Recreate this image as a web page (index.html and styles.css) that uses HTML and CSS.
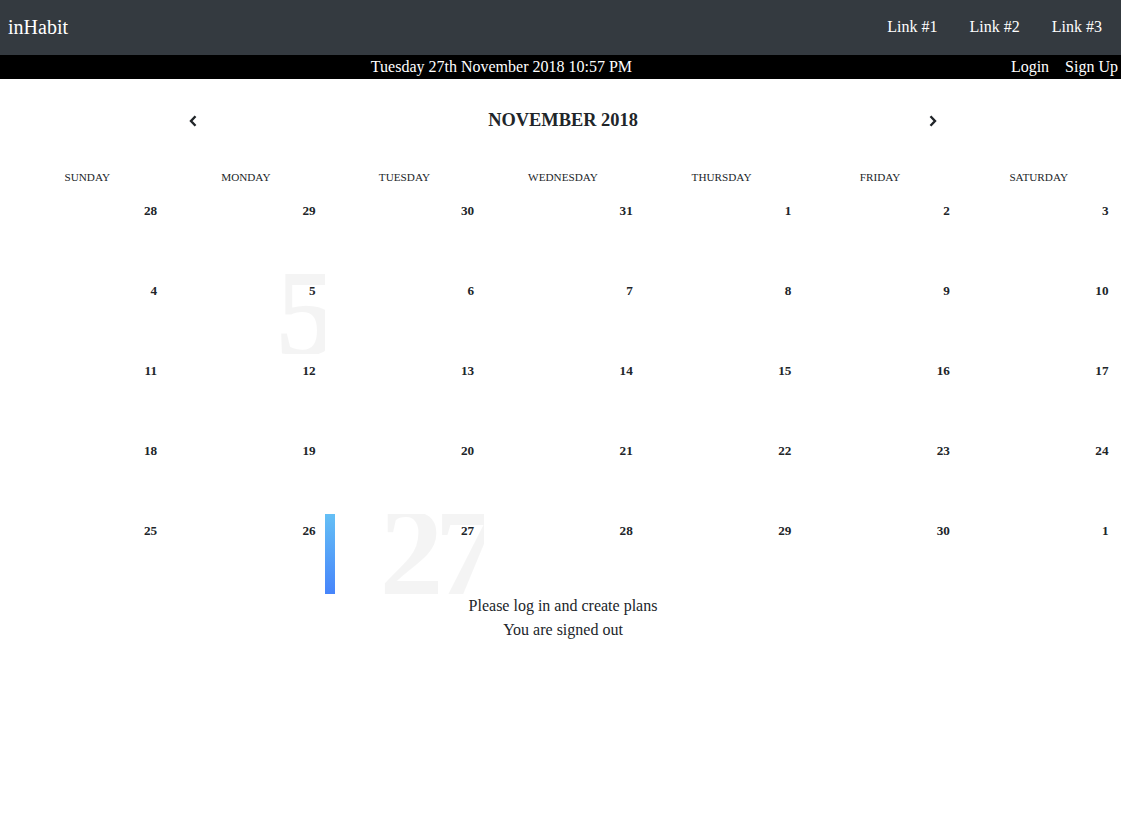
FILE: index.html
```html
<!DOCTYPE html>
<html>
<head>
<meta charset="utf-8">
<link rel="stylesheet" href="styles.css">
</head>
<body>
<nav class="navbar">
  <span class="brand">inHabit</span>
  <div class="nav-links">
    <a class="nav-link">Link #1</a>
    <a class="nav-link">Link #2</a>
    <a class="nav-link">Link #3</a>
  </div>
</nav>
<div class="datebar">
  <div class="date">Tuesday 27th November 2018 10:57 PM</div>
  <div class="auth">
    <a class="auth-link">Login</a>
    <a class="auth-link">Sign Up</a>
  </div>
</div>
<div class="calendar">
  <div class="cal-header">
    <div class="hcol"><svg class="chev" width="8" height="12" viewBox="0 0 8 12"><path d="M6.5 1.2 L2 6 L6.5 10.8" fill="none" stroke="#212529" stroke-width="2.4"/></svg></div>
    <div class="hcol month">November 2018</div>
    <div class="hcol"><svg class="chev" width="8" height="12" viewBox="0 0 8 12"><path d="M1.5 1.2 L6 6 L1.5 10.8" fill="none" stroke="#212529" stroke-width="2.4"/></svg></div>
  </div>
  <div class="days">
    <div class="day">Sunday</div>
    <div class="day">Monday</div>
    <div class="day">Tuesday</div>
    <div class="day">Wednesday</div>
    <div class="day">Thursday</div>
    <div class="day">Friday</div>
    <div class="day">Saturday</div>
  </div>
  <div class="grid">
    <div class="cell"><span class="number">28</span></div>
    <div class="cell"><span class="number">29</span></div>
    <div class="cell"><span class="number">30</span></div>
    <div class="cell"><span class="number">31</span></div>
    <div class="cell"><span class="number">1</span></div>
    <div class="cell"><span class="number">2</span></div>
    <div class="cell"><span class="number">3</span></div>

    <div class="cell"><span class="number">4</span></div>
    <div class="cell hover"><span class="ghost">5</span><span class="number">5</span></div>
    <div class="cell"><span class="number">6</span></div>
    <div class="cell"><span class="number">7</span></div>
    <div class="cell"><span class="number">8</span></div>
    <div class="cell"><span class="number">9</span></div>
    <div class="cell"><span class="number">10</span></div>

    <div class="cell"><span class="number">11</span></div>
    <div class="cell"><span class="number">12</span></div>
    <div class="cell"><span class="number">13</span></div>
    <div class="cell"><span class="number">14</span></div>
    <div class="cell"><span class="number">15</span></div>
    <div class="cell"><span class="number">16</span></div>
    <div class="cell"><span class="number">17</span></div>

    <div class="cell"><span class="number">18</span></div>
    <div class="cell"><span class="number">19</span></div>
    <div class="cell"><span class="number">20</span></div>
    <div class="cell"><span class="number">21</span></div>
    <div class="cell"><span class="number">22</span></div>
    <div class="cell"><span class="number">23</span></div>
    <div class="cell"><span class="number">24</span></div>

    <div class="cell"><span class="number">25</span></div>
    <div class="cell"><span class="number">26</span></div>
    <div class="cell selected"><span class="ghost">27</span><span class="number">27</span></div>
    <div class="cell"><span class="number">28</span></div>
    <div class="cell"><span class="number">29</span></div>
    <div class="cell"><span class="number">30</span></div>
    <div class="cell"><span class="number">1</span></div>
  </div>
  <div class="message">
    <div>Please log in and create plans</div>
    <div>You are signed out</div>
  </div>
</div>
</body>
</html>
```

FILE: styles.css
```css
html, body {
  margin: 0;
  padding: 0;
}
body {
  font-family: "Liberation Serif", "Times New Roman", serif;
  font-size: 16px;
  line-height: 1.5;
  color: #212529;
  background: #fff;
}
.navbar {
  height: 55px;
  background: #343a40;
  display: flex;
  align-items: center;
  justify-content: space-between;
  padding: 0 19px 0 8px;
  box-sizing: border-box;
}
.brand {
  color: #fff;
  font-size: 20px;
  line-height: 1;
  margin-top: -2px;
}
.nav-links {
  display: flex;
  gap: 32px;
}
.nav-link {
  color: #fff;
  font-size: 16px;
  margin-top: -1px;
}
.datebar {
  height: 24px;
  background: #000;
  color: #fff;
  display: flex;
  align-items: center;
  padding-right: 3px;
}
.date {
  flex: 1;
  text-align: center;
  margin-right: 8px;
}
.auth {
  display: flex;
  gap: 16px;
}
.calendar {
  margin: 0 3px 0 8px;
}
.cal-header {
  display: flex;
  align-items: center;
  height: 83px;
  font-weight: 700;
  font-size: 18.4px;
  text-transform: uppercase;
}
.hcol {
  flex: 1;
  text-align: center;
  display: flex;
  justify-content: center;
  align-items: center;
}
.month {
  padding-top: 1px;
}
.chev {
  display: block;
}
.days {
  display: grid;
  grid-template-columns: repeat(7, 1fr);
  height: 32px;
  align-items: center;
  font-size: 11.2px;
  text-transform: uppercase;
  text-align: center;
  padding-bottom: 2px;
  box-sizing: border-box;
}
.grid {
  display: grid;
  grid-template-columns: repeat(7, 1fr);
  grid-auto-rows: 80px;
}
.cell {
  position: relative;
  overflow: hidden;
}
.number {
  position: absolute;
  top: 10px;
  right: 9.5px;
  font-size: 13.2px;
  font-weight: 700;
  line-height: 1;
}
.ghost {
  position: absolute;
  font-family: "Liberation Serif", serif;
  font-weight: bold;
  line-height: 1;
  font-size: 128px;
  letter-spacing: -0.07em;
  color: rgba(0, 0, 0, 0.045);
  top: -26px;
  right: -6px;
}
.selected {
  border-left: 10px solid transparent;
  border-image: linear-gradient(to bottom, #65c0f5, #4684fb) 1;
}
.message {
  text-align: center;
}
```
